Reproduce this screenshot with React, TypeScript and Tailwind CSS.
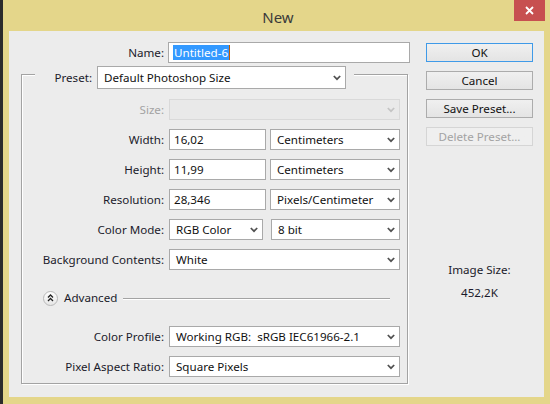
import React from 'react';

const font = { fontFamily: '"Noto Sans", "Open Sans", sans-serif' };

const Chevron: React.FC<{ disabled?: boolean }> = ({ disabled }) => (
  <svg width="8" height="6" viewBox="0 0 8 6" className="shrink-0">
    <polyline
      points="0.8,1 4,4.2 7.2,1"
      fill="none"
      stroke={disabled ? '#c4c4c4' : '#505050'}
      strokeWidth="1.7"
    />
  </svg>
);

const Select: React.FC<{ value?: string; className: string; disabled?: boolean }> = ({ value, className, disabled }) => (
  <div
    className={`${className} h-[21px] flex items-center justify-between pl-[6px] pr-[4px] border ${
      disabled ? 'bg-[#e9e9e9] border-[#d9d9d9]' : 'bg-white border-[#a9a9a9]'
    }`}
  >
    <span className="text-[11.6px] text-[#111] whitespace-pre leading-none">{value}</span>
    <Chevron disabled={disabled} />
  </div>
);

const TextField: React.FC<{ value: string; className: string }> = ({ value, className }) => (
  <div className={`${className} h-[21px] flex items-center pl-[4px] bg-white border border-[#a9a9a9]`}>
    <span className="text-[11.6px] text-[#111] leading-none">{value}</span>
  </div>
);

const Row: React.FC<{ label: string; dim?: boolean; className?: string; children: React.ReactNode }> = ({
  label,
  dim,
  className = '',
  children,
}) => (
  <div className={`flex items-center h-[21px] ${className}`}>
    <div className={`w-[142px] text-right text-[11.6px] ${dim ? 'text-[#a3a3a3]' : 'text-[#1b1b2b]'}`}>{label}</div>
    <div className="ml-[5px] flex items-center">{children}</div>
  </div>
);

const Btn: React.FC<{ label: string; primary?: boolean; disabled?: boolean }> = ({ label, primary, disabled }) => (
  <div
    className={`h-[19px] w-[107px] flex items-center justify-center text-[11.6px] border bg-gradient-to-b ${
      disabled
        ? 'border-[#d5d5d5] text-[#a3a3a3] from-[#efefef] to-[#efefef]'
        : primary
          ? 'border-[#3f9ae8] text-[#111] from-[#f0f0f0] to-[#e4e4e4]'
          : 'border-[#acacac] text-[#111] from-[#f0f0f0] to-[#e4e4e4]'
    }`}
  >
    {label}
  </div>
);

export default function App() {
  return (
    <div style={font} className="w-[550px] h-[404px] flex bg-[#e4d68a] overflow-hidden">
      <div className="w-[3px] bg-[#2b2b2b]" />
      <div className="flex-1 flex flex-col">
        {/* Title bar */}
        <div className="h-[31px] grid grid-cols-[1fr_auto_1fr]">
          <div />
          <div className="text-[15px] text-[#3a3a3a] pt-[6px] pl-[3px]">New</div>
          <div className="flex justify-end pr-[5px]">
            <div className="w-[31px] h-[21px] bg-[#c75050] flex items-center justify-center">
              <svg width="9" height="9" viewBox="0 0 9 9">
                <path d="M1 1 L8 8 M8 1 L1 8" stroke="#fff" strokeWidth="1.8" />
              </svg>
            </div>
          </div>
        </div>

        {/* Client area */}
        <div className="ml-[6px] mr-[6px] h-[366px] bg-[#ececec] flex">
          {/* Left column */}
          <div className="ml-[12px] w-[389px] flex flex-col">
            <div className="mt-[11px] flex items-center h-[21px]">
              <div className="w-[143px] text-right text-[11.6px] text-[#1b1b2b]">Name:</div>
              <div className="ml-[4px] w-[242px] h-[21px] flex items-center pl-[4px] bg-white border border-[#a9a9a9]">
                <span className="text-[11.6px] leading-[15px] bg-[#3399ff] text-white px-[1px] border-r border-[#c05a00]">
                  Untitled-6
                </span>
              </div>
            </div>

            {/* Group box */}
            <div className="mt-[11px] w-[387px] border-l border-r border-b border-[#a3a3a3] shadow-[1px_1px_0_#fff,inset_1px_0_0_#fff] flex flex-col pb-[6px]">
              <div className="-mt-[8px] flex items-start h-[23px]">
                <div className="mt-[8px] w-[13px] border-t border-[#a3a3a3] shadow-[0_1px_0_#fff]" />
                <div className="w-[57px] h-[23px] flex items-center justify-end text-[11.6px] text-[#1b1b2b]">Preset:</div>
                <Select className="ml-[5px] w-[249px] !h-[23px]" value="Default Photoshop Size" />
                <div className="mt-[8px] ml-[8px] flex-1 border-t border-[#a3a3a3] shadow-[0_1px_0_#fff]" />
              </div>

              <Row label="Size:" dim className="mt-[10px]">
                <Select className="w-[231px]" disabled />
              </Row>
              <Row label="Width:" className="mt-[9px]">
                <TextField className="w-[97px]" value="16,02" />
                <Select className="ml-[4px] w-[130px]" value="Centimeters" />
              </Row>
              <Row label="Height:" className="mt-[9px]">
                <TextField className="w-[97px]" value="11,99" />
                <Select className="ml-[4px] w-[130px]" value="Centimeters" />
              </Row>
              <Row label="Resolution:" className="mt-[9px]">
                <TextField className="w-[97px]" value="28,346" />
                <Select className="ml-[4px] w-[130px]" value="Pixels/Centimeter" />
              </Row>
              <Row label="Color Mode:" className="mt-[9px]">
                <Select className="w-[94px]" value="RGB Color" />
                <Select className="ml-[8px] w-[129px]" value="8 bit" />
              </Row>
              <Row label="Background Contents:" className="mt-[9px]">
                <Select className="w-[231px]" value="White" />
              </Row>

              <div className="mt-[21px] h-[14px] flex items-center">
                <div className="ml-[21px] w-[15px] h-[15px] rounded-full bg-gradient-to-b from-white to-[#e6e6e6] border border-[#b8b8b8] flex items-center justify-center">
                  <svg width="7" height="8" viewBox="0 0 7 8">
                    <path d="M1 3.5 L3.5 1 L6 3.5 M1 7 L3.5 4.5 L6 7" fill="none" stroke="#222" strokeWidth="1.3" />
                  </svg>
                </div>
                <span className="ml-[6px] text-[11.6px] text-[#1b1b2b]">Advanced</span>
                <div className="ml-[6px] mr-[17px] flex-1 border-t border-[#a3a3a3] shadow-[0_1px_0_#fff]" />
              </div>

              <Row label="Color Profile:" className="mt-[21px]">
                <Select className="w-[231px]" value="Working RGB:  sRGB IEC61966-2.1" />
              </Row>
              <Row label="Pixel Aspect Ratio:" className="mt-[9px]">
                <Select className="w-[231px]" value="Square Pixels" />
              </Row>
            </div>
          </div>

          {/* Right column */}
          <div className="ml-[16px] w-[107px] flex flex-col items-center">
            <div className="mt-[12px] flex flex-col gap-[9px]">
              <Btn label="OK" primary />
              <Btn label="Cancel" />
              <Btn label="Save Preset..." />
              <Btn label="Delete Preset..." disabled />
            </div>
            <div className="mt-[116px] text-[11.6px] leading-[16px] text-[#1b1b2b]">Image Size:</div>
            <div className="mt-[7px] text-[11.6px] leading-[16px] text-[#1b1b2b]">452,2K</div>
          </div>
        </div>
      </div>
    </div>
  );
}
